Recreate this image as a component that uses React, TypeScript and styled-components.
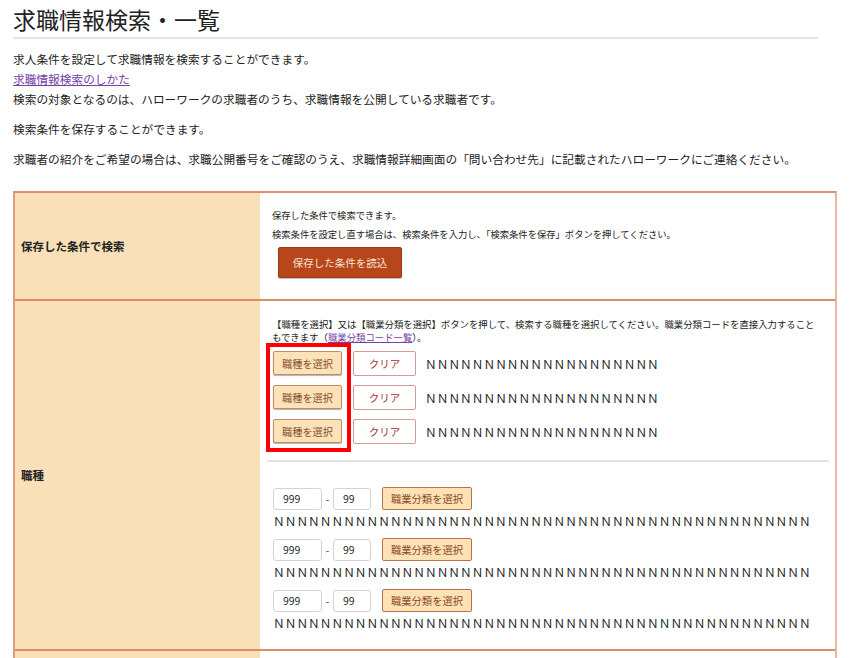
import React from 'react';
import styled, { createGlobalStyle } from 'styled-components';

const GlobalStyle = createGlobalStyle`
  body {
    margin: 0;
    background: #fff;
    color: #222;
    font-family: "Noto Sans CJK JP", "Noto Sans", sans-serif;
  }
`;

const jobRows = [0, 1, 2];
const codeRows = [0, 1, 2];
const N_SHORT = 'Ｎ'.repeat(20);
const N_LONG = 'Ｎ'.repeat(46);

const App: React.FC = () => {
  return (
    <>
      <GlobalStyle />
      <Page>
        <Title>求職情報検索・一覧</Title>
        <Intro>
          <Para>
            求人条件を設定して求職情報を検索することができます。
            <br />
            <Link href="#">求職情報検索のしかた</Link>
            <br />
            検索の対象となるのは、ハローワークの求職者のうち、求職情報を公開している求職者です。
          </Para>
          <Para>検索条件を保存することができます。</Para>
          <Para>
            求職者の紹介をご希望の場合は、求職公開番号をご確認のうえ、求職情報詳細画面の「問い合わせ先」に記載されたハローワークにご連絡ください。
          </Para>
        </Intro>

        <Table>
          <Row>
            <HeadCell>保存した条件で検索</HeadCell>
            <BodyCell>
              <SavedBox>
                <SmallText>
                  保存した条件で検索できます。
                  <br />
                  検索条件を設定し直す場合は、検索条件を入力し、「検索条件を保存」ボタンを押してください。
                </SmallText>
                <LoadButton>保存した条件を読込</LoadButton>
              </SavedBox>
            </BodyCell>
          </Row>

          <Row>
            <HeadCell>職種</HeadCell>
            <BodyCell>
              <JobSection>
                <Note>
                  【職種を選択】又は【職業分類を選択】ボタンを押して、検索する職種を選択してください。職業分類コードを直接入力することもできます（<NoteLink href="#">職業分類コード一覧</NoteLink>）。
                </Note>
                <ButtonList>
                  <Highlight />
                  {jobRows.map((i) => (
                    <JobRow key={i}>
                      <SelectButton>職種を選択</SelectButton>
                      <ClearButton>クリア</ClearButton>
                      <NText>{N_SHORT}</NText>
                    </JobRow>
                  ))}
                </ButtonList>
              </JobSection>
              <Divider />
              <CodeSection>
                {codeRows.map((i) => (
                  <CodeGroup key={i}>
                    <CodeRow>
                      <CodeInput defaultValue="999" width={49} />
                      <Dash>-</Dash>
                      <CodeInput defaultValue="99" width={38} />
                      <ClassButton>職業分類を選択</ClassButton>
                    </CodeRow>
                    <NLine>{N_LONG}</NLine>
                  </CodeGroup>
                ))}
              </CodeSection>
            </BodyCell>
          </Row>

          <Row>
            <HeadCell />
            <BodyCell>
              <Spacer />
            </BodyCell>
          </Row>
        </Table>
      </Page>
    </>
  );
};

const Page = styled.div`
  padding: 0 13px;
`;

const Title = styled.h1`
  width: 805px;
  margin: 0;
  padding-top: 1px;
  font-size: 23px;
  font-weight: normal;
  line-height: 36px;
  color: #222;
  border-bottom: 2px solid #e4e4e4;
`;

const Intro = styled.div`
  width: 805px;
  padding-top: 10px;
`;

const Para = styled.p`
  margin: 0 0 10px;
  font-size: 11.7px;
  line-height: 20px;
`;

const Link = styled.a`
  color: #7442a6;
  text-decoration: underline;
`;

const Table = styled.div`
  width: 824px;
  margin-top: 22px;
  border-top: 2px solid #dc8f6a;
  border-left: 2px solid #dc9c7e;
  border-right: 2px solid #e8b6a0;
  box-sizing: border-box;
`;

const Row = styled.div`
  display: grid;
  grid-template-columns: 245px 1fr;
  border-bottom: 2px solid #dc8c66;
`;

const HeadCell = styled.div`
  display: flex;
  align-items: center;
  padding-left: 6px;
  background: #f9e0b8;
  font-size: 11.5px;
  font-weight: bold;
  color: #222;
`;

const BodyCell = styled.div`
  padding: 0 6px 0 7px;
  background: #fff;
`;

const SavedBox = styled.div`
  padding: 13px 0 21px 5px;
`;

const SmallText = styled.p`
  margin: 0;
  font-size: 9.3px;
  line-height: 19px;
  color: #222;
`;

const LoadButton = styled.button`
  display: block;
  margin: 3px 0 0 6px;
  width: 124px;
  height: 31px;
  border: 1px solid #9c3a14;
  border-radius: 2px;
  background: #b8461b;
  color: #fbe4d4;
  font-family: inherit;
  font-size: 10.5px;
  box-shadow: 0 1px 1px rgba(0, 0, 0, 0.25);
`;

const JobSection = styled.div`
  padding: 17px 6px 0 5px;
`;

const Note = styled.p`
  margin: 0;
  font-size: 9.4px;
  line-height: 13px;
  color: #222;
`;

const NoteLink = styled.a`
  display: inline-block;
  line-height: 13px;
  color: #7442a6;
  text-decoration: underline;
`;

const ButtonList = styled.div`
  position: relative;
  display: flex;
  flex-direction: column;
  gap: 10px;
  margin: 7px 0 0 1px;
`;

const Highlight = styled.div`
  position: absolute;
  left: -7px;
  top: -8px;
  width: 85px;
  height: 109px;
  border: 4px solid #ff0000;
  box-sizing: border-box;
  pointer-events: none;
`;

const JobRow = styled.div`
  display: flex;
  align-items: center;
  height: 24px;
`;

const SelectButton = styled.button`
  width: 69px;
  height: 24px;
  padding: 0;
  border: 1.5px solid #c48a66;
  border-radius: 2px;
  background: #fbe2b8;
  color: #8a4f2e;
  font-family: inherit;
  font-size: 10.2px;
  box-shadow: 0 1px 1px rgba(0, 0, 0, 0.3);
`;

const ClearButton = styled.button`
  width: 63px;
  height: 25px;
  margin-left: 11px;
  padding: 0;
  border: 1px solid #d49a9a;
  border-radius: 2px;
  background: #fff;
  color: #a83434;
  font-family: inherit;
  font-size: 10.5px;
`;

const NText = styled.span`
  margin-left: 9px;
  font-size: 11.7px;
  color: #222;
  white-space: nowrap;
`;

const Divider = styled.div`
  height: 2px;
  margin-top: 17px;
  background: #e2e2e2;
`;

const CodeSection = styled.div`
  padding: 25px 6px 15px 6px;
`;

const CodeGroup = styled.div`
  margin-bottom: 6px;

  &:last-child {
    margin-bottom: 0;
  }
`;

const CodeRow = styled.div`
  display: flex;
  align-items: center;
  height: 23px;
`;

const CodeInput = styled.input<{ width: number }>`
  width: ${(p) => p.width}px;
  height: 22px;
  box-sizing: border-box;
  padding: 0 0 0 9px;
  border: 1px solid #d4d4d4;
  border-radius: 3px;
  background: #fff;
  color: #222;
  font-family: "Noto Sans", sans-serif;
  font-size: 10px;
  outline: none;
`;

const Dash = styled.span`
  width: 11px;
  text-align: center;
  font-size: 10px;
  color: #333;
`;

const ClassButton = styled.button`
  width: 90px;
  height: 23px;
  margin-left: 11px;
  padding: 0;
  border: 1.5px solid #b8714c;
  border-radius: 2px;
  background: #fde2b6;
  color: #8a4a2a;
  font-family: inherit;
  font-size: 10.3px;
`;

const NLine = styled.div`
  font-size: 11.7px;
  line-height: 22px;
  color: #222;
  white-space: nowrap;
`;

const Spacer = styled.div`
  height: 80px;
`;

export default App;
